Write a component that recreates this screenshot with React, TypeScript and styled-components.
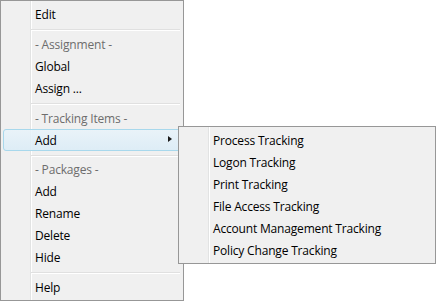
import React from 'react'
import styled, { createGlobalStyle } from 'styled-components'

type Entry =
  | { kind: 'item'; label: string; active?: boolean; submenu?: boolean }
  | { kind: 'header'; label: string }
  | { kind: 'sep' }

const mainEntries: Entry[] = [
  { kind: 'item', label: 'Edit' },
  { kind: 'sep' },
  { kind: 'header', label: '- Assignment -' },
  { kind: 'item', label: 'Global' },
  { kind: 'item', label: 'Assign ...' },
  { kind: 'sep' },
  { kind: 'header', label: '- Tracking Items -' },
  { kind: 'item', label: 'Add', active: true, submenu: true },
  { kind: 'sep' },
  { kind: 'header', label: '- Packages -' },
  { kind: 'item', label: 'Add' },
  { kind: 'item', label: 'Rename' },
  { kind: 'item', label: 'Delete' },
  { kind: 'item', label: 'Hide' },
  { kind: 'sep' },
  { kind: 'item', label: 'Help' },
]

const subEntries = [
  'Process Tracking',
  'Logon Tracking',
  'Print Tracking',
  'File Access Tracking',
  'Account Management Tracking',
  'Policy Change Tracking',
]

function renderEntry(entry: Entry, i: number) {
  if (entry.kind === 'sep') return <Separator key={i} />
  if (entry.kind === 'header') return <Item key={i} $muted>{entry.label}</Item>
  return (
    <Item key={i} $active={entry.active}>
      {entry.label}
      {entry.submenu && <Arrow />}
    </Item>
  )
}

function App() {
  return (
    <>
      <GlobalStyle />
      <Screen>
        <Menu $width={184} $height={301}>
          {mainEntries.map(renderEntry)}
        </Menu>
        <SubMenu>
          {subEntries.map((label) => (
            <Item key={label}>{label}</Item>
          ))}
        </SubMenu>
      </Screen>
    </>
  )
}

export default App

const GlobalStyle = createGlobalStyle`
  html, body {
    margin: 0;
    padding: 0;
    background: #ffffff;
  }
  body {
    font-family: 'Open Sans', 'Noto Sans', sans-serif;
    font-size: 12px;
    letter-spacing: -0.18px;
  }
`

const Screen = styled.div`
  position: relative;
  width: 436px;
  height: 302px;
  overflow: hidden;
`

const Menu = styled.div<{ $width: number; $height: number }>`
  box-sizing: border-box;
  width: ${({ $width }) => $width}px;
  height: ${({ $height }) => $height}px;
  border: 1px solid #979797;
  padding: 2px;
  display: flex;
  flex-direction: column;
  background: linear-gradient(
    to right,
    #f0f0f0 0 29px,
    #e2e3e3 29px 30px,
    #ffffff 30px 31px,
    #f0f0f0 31px
  );
`

const SubMenu = styled(Menu).attrs({ $width: 258, $height: 138 })`
  position: absolute;
  left: 178px;
  top: 126px;
`

const Item = styled.div<{ $active?: boolean; $muted?: boolean }>`
  position: relative;
  box-sizing: border-box;
  height: 22px;
  line-height: 21px;
  padding-left: 32px;
  color: ${({ $muted }) => ($muted ? '#6d6d6d' : '#000000')};
  white-space: nowrap;
  border: 1px solid transparent;
  border-radius: 3px;
  text-indent: -1px;
  ${({ $active }) =>
    $active &&
    `
    border-color: #a8d8ec;
    background: linear-gradient(to bottom, rgba(232, 243, 250, 0.85), rgba(218, 236, 247, 0.85));
  `}
`

const Arrow = styled.span`
  position: absolute;
  left: 164px;
  top: 6px;
  width: 0;
  height: 0;
  border-top: 3.5px solid transparent;
  border-bottom: 3.5px solid transparent;
  border-left: 4px solid #1a1a1a;
`

const Separator = styled.div`
  height: 8px;
  margin-left: 28px;
  margin-right: 1px;
  background: linear-gradient(
    to bottom,
    transparent 0 4px,
    #e0e0e0 4px 5px,
    #ffffff 5px 6px,
    transparent 6px
  );
`
